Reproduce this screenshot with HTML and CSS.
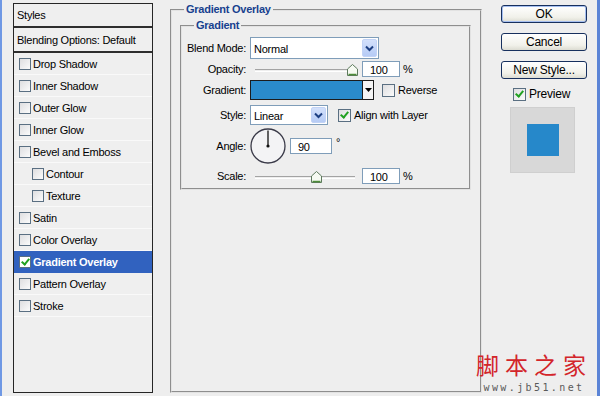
FILE: index.html
```html
<!DOCTYPE html>
<html lang="en">
<head>
    <meta charset="UTF-8">
    <title>Layer Style</title>
    <link rel="stylesheet" href="styles.css">
</head>
<body>
  <div class="window">
    <div class="styles-panel">
      <div class="panel-head">Styles</div>
      <div class="panel-head second">Blending Options: Default</div>
      <ul class="effects">
        <li><span class="check"></span>Drop Shadow</li>
        <li><span class="check"></span>Inner Shadow</li>
        <li><span class="check"></span>Outer Glow</li>
        <li><span class="check"></span>Inner Glow</li>
        <li><span class="check"></span>Bevel and Emboss</li>
        <li class="sub"><span class="check"></span>Contour</li>
        <li class="sub"><span class="check"></span>Texture</li>
        <li><span class="check"></span>Satin</li>
        <li><span class="check"></span>Color Overlay</li>
        <li class="active"><span class="check on"></span>Gradient Overlay</li>
        <li><span class="check"></span>Pattern Overlay</li>
        <li><span class="check"></span>Stroke</li>
      </ul>
    </div>

    <fieldset class="group outer">
      <legend>Gradient Overlay</legend>
      <fieldset class="group inner">
        <legend>Gradient</legend>

        <div class="row r-blend">
          <label>Blend Mode:</label>
          <div class="select wide"><span>Normal</span><i class="arrow"><svg width="9" height="7" viewBox="0 0 9 7"><path d="M1 1.5 L4.5 5 L8 1.5" fill="none" stroke="#1d3f82" stroke-width="2"/></svg></i></div>
        </div>

        <div class="row r-opacity">
          <label>Opacity:</label>
          <div class="slider"><span class="track"></span><span class="thumb" style="left:97px"><svg width="11" height="12" viewBox="0 0 11 12"><path d="M0.5 5 L5.5 0.5 L10.5 5 V11.5 H0.5 Z" fill="#f6faf2" stroke="#5d7a5d"/><path d="M1.5 10.5 H9.5" stroke="#4e8c3a" stroke-width="1.5"/></svg></span></div>
          <div class="num">100</div><span class="unit">%</span>
        </div>

        <div class="row r-gradient">
          <label>Gradient:</label>
          <div class="swatch"><span class="fill"></span><span class="drop"><svg width="7" height="4" viewBox="0 0 7 4"><path d="M0 0 H7 L3.5 4 Z" fill="#000"/></svg></span></div>
          <span class="check reverse"></span><span class="opt">Reverse</span>
        </div>

        <div class="row r-style">
          <label>Style:</label>
          <div class="select short"><span>Linear</span><i class="arrow"><svg width="9" height="7" viewBox="0 0 9 7"><path d="M1 1.5 L4.5 5 L8 1.5" fill="none" stroke="#1d3f82" stroke-width="2"/></svg></i></div>
          <span class="check on align"></span><span class="opt">Align with Layer</span>
        </div>

        <div class="row r-angle">
          <label>Angle:</label>
          <svg class="dial" width="36" height="36" viewBox="0 0 36 36">
            <circle cx="18" cy="18" r="17" fill="#f3f3f5" stroke="#3a3a48" stroke-width="1.3"/>
            <line x1="18" y1="18" x2="18" y2="2.5" stroke="#111" stroke-width="1.3"/>
            <circle cx="18" cy="18" r="1.6" fill="#111"/>
          </svg>
          <div class="num angle">90</div><span class="deg">°</span>
        </div>

        <div class="row r-scale">
          <label>Scale:</label>
          <div class="slider"><span class="track"></span><span class="thumb" style="left:61px"><svg width="11" height="12" viewBox="0 0 11 12"><path d="M0.5 5 L5.5 0.5 L10.5 5 V11.5 H0.5 Z" fill="#f6faf2" stroke="#5d7a5d"/><path d="M1.5 10.5 H9.5" stroke="#4e8c3a" stroke-width="1.5"/></svg></span></div>
          <div class="num">100</div><span class="unit">%</span>
        </div>
      </fieldset>
    </fieldset>

    <div class="actions">
      <button class="btn default">OK</button>
      <button class="btn">Cancel</button>
      <button class="btn">New Style...</button>
      <div class="preview-row"><span class="check on"></span>Preview</div>
      <div class="preview"><span class="sample"></span></div>
    </div>

    <div class="watermark">
      <div class="wm-big">脚本之家</div>
      <div class="wm-url">www.jb51.net</div>
    </div>
  </div>
</body>
</html>
```

FILE: styles.css
```css
body {
    margin: 0;
    padding: 0;
    background-color: #eeeeee;
    font-family: "Liberation Sans", Arial, sans-serif;
    font-size: 11px;
    letter-spacing: -0.25px;
    color: #000;
}
.window {
    position: relative;
    display: flex;
    align-items: flex-start;
    width: 600px;
    height: 396px;
    box-sizing: border-box;
    border-left: 2px solid #6f98e4;
    border-right: 3px solid #5b84d6;
    padding: 3px 0 3px 11px;
    overflow: hidden;
}

/* lista de estilos */
.styles-panel {
    align-self: stretch;
    width: 138px;
    flex: none;
    border: 1px solid #262626;
    background-color: #efefef;
}
.panel-head {
    height: 22px;
    line-height: 22px;
    padding-left: 3px;
    border-bottom: 2px solid #2e2e2e;
}
.panel-head.second {
    height: 23px;
    line-height: 24px;
}
.effects {
    list-style: none;
    margin: 0;
    padding: 0;
}
.effects li {
    display: flex;
    align-items: center;
    height: 21px;
    padding-left: 5px;
    border-bottom: 1px solid #f9f9f9;
}
.effects li.sub {
    padding-left: 18px;
}
.effects li.active {
    background-color: #3162bf;
    color: white;
    font-weight: bold;
    border-bottom-color: #3162bf;
}
.check {
    display: inline-block;
    box-sizing: border-box;
    width: 12px;
    height: 12px;
    margin-right: 2px;
    border: 1px solid #5a6f82;
    background: linear-gradient(135deg, #dedee0, #fbfbfb);
    position: relative;
    flex: none;
}
.check.on::after {
    content: "";
    position: absolute;
    left: 3px;
    top: 0px;
    width: 3px;
    height: 6px;
    border: solid #21a121;
    border-width: 0 2px 2px 0;
    transform: rotate(40deg);
}
.effects li.active .check {
    background: #fff;
}

/* recuadros */
.group {
    border: 2px groove #e2e2e2;
    margin: 0;
    padding: 0;
    min-width: 0;
}
.group legend {
    color: #17418e;
    font-weight: bold;
    padding: 0 2px;
    line-height: 13px;
}
.outer {
    align-self: stretch;
    width: 312px;
    box-sizing: border-box;
    margin-left: 17px;
}
.outer > legend {
    margin-left: 12px;
}
.inner {
    width: 291px;
    box-sizing: border-box;
    margin: 3px 0 0 8px;
    padding: 5px 0 4px 0;
}
.inner > legend {
    margin-left: 12px;
}

/* filas del formulario */
.row {
    display: flex;
    align-items: center;
}
.row label {
    width: 64px;
    text-align: right;
    margin-right: 4px;
    flex: none;
}
.r-blend { height: 22px; }
.r-opacity { height: 16px; margin-top: 2px; }
.r-gradient { height: 20px; margin-top: 3px; }
.r-style { height: 20px; margin-top: 5px; }
.r-angle { height: 36px; margin-top: 3px; }
.r-scale { height: 16px; margin-top: 4px; }

.select {
    box-sizing: border-box;
    height: 100%;
    display: flex;
    align-items: center;
    justify-content: space-between;
    border: 1px solid #7f9db9;
    background-color: white;
    padding: 1px 1px 1px 3px;
}
.select.wide { width: 129px; }
.select.short { width: 78px; }
.select span {
    padding-top: 2px;
}
.arrow {
    display: flex;
    align-items: center;
    justify-content: center;
    width: 15px;
    height: 100%;
    box-sizing: border-box;
    background: linear-gradient(#d3e0fb, #b6cbf5);
    border: 1px solid #c2d3f6;
    border-radius: 2px;
}

.slider {
    position: relative;
    width: 108px;
    height: 100%;
    flex: none;
}
.track {
    position: absolute;
    left: 5px;
    right: 3px;
    top: 8px;
    height: 1px;
    border-top: 1px solid #a3a3a3;
    border-bottom: 1px solid #ffffff;
}
.thumb {
    position: absolute;
    top: 3px;
    width: 11px;
    height: 12px;
    line-height: 0;
}
.num {
    box-sizing: border-box;
    width: 38px;
    height: 16px;
    margin-left: 4px;
    border: 1px solid #7f9db9;
    background-color: white;
    padding: 2px 0 0 7px;
}
.num.angle {
    width: 42px;
}
.unit {
    margin-left: 3px;
}
.deg {
    margin-left: 4px;
    align-self: flex-start;
    margin-top: 8px;
}

.swatch {
    box-sizing: border-box;
    display: flex;
    width: 124px;
    height: 20px;
    border: 1px solid #1c1c1c;
    flex: none;
}
.swatch .fill {
    flex: 1;
    background-color: #2a8bcb;
    border-right: 1px solid #1c1c1c;
}
.swatch .drop {
    width: 10px;
    display: flex;
    align-items: center;
    justify-content: center;
    background-color: #f4f4f4;
}
.check.reverse {
    width: 13px;
    height: 13px;
    margin-left: 8px;
}
.check.align {
    width: 13px;
    height: 13px;
    margin-left: 10px;
    margin-right: 2px;
}
.opt {
    margin-left: 1px;
}
.dial {
    flex: none;
}

/* botones */
.actions {
    width: 86px;
    margin-left: 19px;
    padding-top: 2px;
    display: flex;
    flex-direction: column;
    flex: none;
}
.btn {
    box-sizing: border-box;
    height: 18px;
    width: 86px;
    margin: 0 0 10px 0;
    padding: 0;
    font-family: "Liberation Sans", Arial, sans-serif;
    font-size: 12px;
    letter-spacing: -0.2px;
    color: #000;
    border: 1px solid #17305e;
    border-radius: 3px;
    background: linear-gradient(#ffffff, #f1f1ea 70%, #dcdcd2);
}
.btn.default {
    box-shadow: inset 0 0 0 1px #a6bff0;
}
.preview-row {
    display: flex;
    align-items: center;
    height: 14px;
    margin-top: -2px;
    padding-left: 12px;
    font-size: 12px;
    letter-spacing: -0.2px;
}
.preview-row .check {
    width: 13px;
    height: 13px;
    margin-right: 3px;
}
.preview {
    box-sizing: border-box;
    width: 65px;
    height: 66px;
    margin: 6px 0 0 9px;
    background-color: #d8d8d8;
    border: 1px solid #cfcfcf;
    display: flex;
    align-items: center;
    justify-content: center;
}
.sample {
    width: 32px;
    height: 32px;
    background-color: #2688ca;
}

/* marca de agua */
.watermark {
    position: absolute;
    left: 474px;
    top: 352px;
    text-align: center;
}
.wm-big {
    font-family: "Noto Sans CJK SC", sans-serif;
    font-size: 23px;
    line-height: 24px;
    letter-spacing: 6px;
    color: #d3252a;
}
.wm-url {
    margin-top: 6px;
    font-family: "DejaVu Sans Mono", monospace;
    font-size: 10px;
    line-height: 11px;
    letter-spacing: 2.4px;
    color: #5a5a5a;
}
```
